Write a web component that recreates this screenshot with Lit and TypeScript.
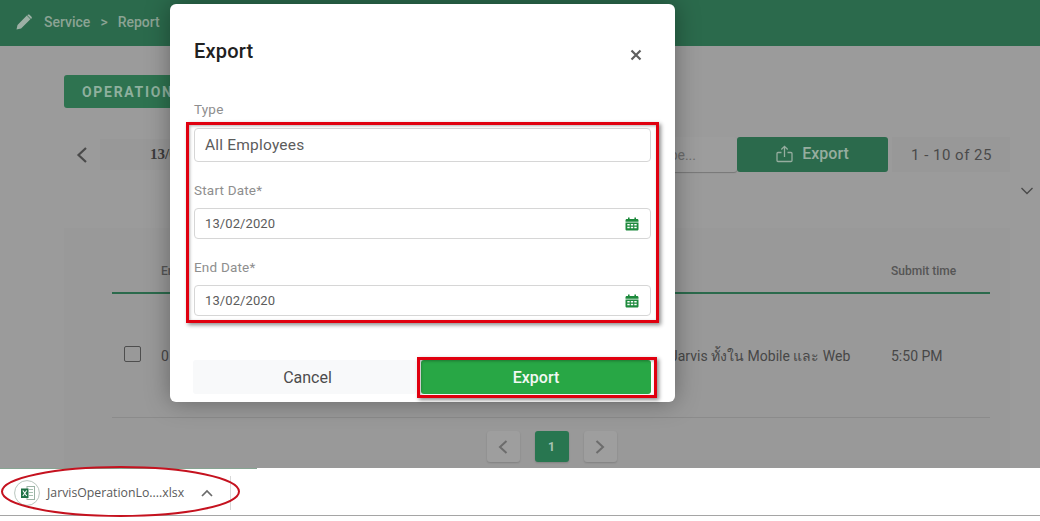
import { LitElement, html, css } from "lit";
import { customElement } from "lit/decorators.js";

const calendar = html`<svg class="cal" viewBox="0 0 14 14" width="14" height="14"><path fill="#1d8a3c" d="M3 .5h1.600v1.600h4.800V.5H11v1.600h1.200c.7 0 1.300.6 1.300 1.300v1.400H.5V3.400c0-.7.6-1.300 1.300-1.300H3z"/><path fill="#1d8a3c" fill-rule="evenodd" d="M.5 5.600h13v6.600c0 .7-.6 1.300-1.300 1.300H1.800c-.7 0-1.300-.6-1.300-1.300zM2.300 7v1.500h2.400V7zm3.500 0v1.500h2.400V7zm3.500 0v1.500h2.400V7zM2.300 9.700v1.500h2.400V9.700zm3.500 0v1.500h2.400V9.700zm3.500 0v1.500h2.400V9.700z"/></svg>`;

@customElement("app-root")
export class AppRoot extends LitElement {
  static styles = css`
    :host { display: block; position: relative; width: 1040px; height: 521px; overflow: hidden; font-family: Roboto, "Noto Sans", sans-serif; background: #fff; }
    * { box-sizing: border-box; }
    .page { display: flex; flex-direction: column; height: 468px; background: #9b9b9b; }
    .topbar { height: 46px; flex: none; background: #2b6a4c; display: flex; align-items: center; gap: 12px; padding: 0 0 3px 16px; color: #8ba394; font-size: 14px; font-weight: 500; }
    .crumbs { display: flex; gap: 10px; }
    .content { flex: 1; display: flex; flex-direction: column; padding: 29px 0 0 64px; min-height: 0; }
    .tab { align-self: flex-start; width: 150px; height: 33px; border-radius: 3px; background: #2e7350; color: #8fb09e; font-size: 14px; font-weight: 700; letter-spacing: 1.7px; display: flex; align-items: center; padding-left: 18px; }
    .toolbar { margin-top: 29px; height: 35px; display: flex; align-items: center; }
    .back { width: 36px; display: flex; padding-left: 11px; }
    .datebox { width: 560px; height: 31px; background: #989898; display: flex; align-items: center; padding-left: 50px; font: bold 15px "Liberation Serif", serif; color: #3c3c3c; }
    .search { width: 77px; height: 35px; background: #9d9d9d; border-radius: 0 3px 3px 0; box-shadow: 0 1px 1px #777; display: flex; align-items: center; font-size: 14px; color: #6c6c6c; justify-content: flex-end; padding-right: 41px; }
    .export { width: 151px; height: 35px; border-radius: 3px; background: #2b6a4c; color: #96ad9f; font-size: 16px; font-weight: 500; display: flex; align-items: center; justify-content: center; gap: 9px; padding: 0 0 2px 0; }
    .count { margin-left: 4px; width: 118px; height: 35px; padding-left: 19px; display: flex; align-items: center; font-size: 15px; color: #4a4a4a; background: #989898; letter-spacing: .5px; }
    .filter-row { height: 56px; width: 970px; display: flex; justify-content: flex-end; padding: 15px 0 0 0; }
    .card { flex: 1; width: 946px; background: #999; padding: 25px 20px 0 48px; display: flex; flex-direction: column; }
    .thead, .trow { display: grid; grid-template-columns: 49px 510px 220px 1fr; }
    .thead { height: 41px; border-bottom: 2px solid #2b6a4c; align-items: center; font-size: 12px; font-weight: 500; color: #555; padding-bottom: 3px; }
    .trow { height: 124px; border-bottom: 1px solid #8b8b8b; align-items: center; font-size: 14px; color: #474747; }
    .check { width: 17px; height: 16px; border: 1.6px solid #4e4e4e; border-radius: 2px; margin-left: 12px; margin-bottom: 4px; }
    .desc { white-space: nowrap; font-size: 14px; color: #474747; margin-left: -1px; }
    .pager { display: flex; justify-content: center; gap: 15px; margin: 13px 0 0 1px; }
    .pg { width: 33px; height: 31px; border-radius: 3px; background: #9e9e9e; box-shadow: 0 1px 2px #808080; display: flex; align-items: center; justify-content: center; color: #a9c3b4; font-size: 12px; font-weight: 700; }
    .pg.on { width: 34px; background: #287650; }
    .dl { height: 53px; display: flex; align-items: center; padding: 0 0 4px 14px; position: relative; background: #fff; color: #5a5a5a; }
    .dl::before { content: ""; position: absolute; left: 0; top: 0; width: 257px; height: 1px; background: #86a592; }
    .dl::after { content: ""; position: absolute; left: 0; right: 0; bottom: 5px; height: 1px; background: #a5a5a5; }
    .file { margin-left: 7px; font-family: "Open Sans", Roboto, sans-serif; font-size: 12.3px; }
    .caret { margin-left: 17px; display: flex; }
    .sep { width: 1px; height: 34px; background: #d8d8d8; margin-left: 17px; }

    .modal { position: absolute; left: 170px; top: 4px; width: 505px; height: 398px; background: #fff; border-radius: 6px; box-shadow: 0 0 24px rgba(0,0,0,.35); padding: 0 24px; display: flex; flex-direction: column; }
    .mhead { height: 98px; display: flex; justify-content: space-between; padding-top: 36px; flex: none; }
    .title { font-size: 20px; font-weight: 500; color: #212121; line-height: 22px; letter-spacing: .2px; }
    .close { margin: 9px 9px 0 0; }
    .label { font-size: 13.5px; color: #8e8e8e; line-height: 15px; letter-spacing: .2px; }
    .input { height: 34px; width: 457px; margin-top: 11px; border: 1px solid #d6d6d6; border-radius: 4px; padding: 0 11px 0 10px; display: flex; align-items: center; justify-content: space-between; font-size: 15.500px; color: #5c5c5c; letter-spacing: .2px; }
    .date { height: 31px; margin-top: 10px; font-size: 13px; letter-spacing: .1px; }
    .start, .end { margin-top: 21px; }
    .actions { margin-top: 44px; display: flex; margin-left: -1px; gap: 5px; }
    .btn { height: 34px; border-radius: 3px; display: flex; align-items: center; justify-content: center; font-size: 16px; }
    .cancel { width: 224px; background: #f8f9fa; color: #4c4c4c; padding-left: 6px; }
    .ok { width: 231px; background: #28a745; color: #f2f8f3; font-weight: 500; }

    .mark { position: absolute; border: 3px solid #e0000f; box-shadow: 2px 2px 4px rgba(0,0,0,.45), inset 1px 1px 3px rgba(0,0,0,.3); pointer-events: none; }
    .mark.fields { left: 186px; top: 122px; width: 473px; height: 201px; }
    .mark.go { left: 417px; top: 357px; width: 240px; height: 41px; }
    .ellipse { position: absolute; left: 0; top: 464px; pointer-events: none; }
  `;

  render() {
    return html`
      <div class="page">
        <header class="topbar">
          <svg width="16" height="16" viewBox="0 0 16 16"><path fill="#9db0a5" d="M0.500 15.500l1-4.600L10.800 1.600l3.600 3.600-9.300 9.300zM11.800.8c.5-.5 1.200-.5 1.700 0l2 2c.5.5.5 1.200 0 1.700l-.5.500-3.700-3.700z"/></svg>
          <div class="crumbs"><span>Service</span><span>&gt;</span><span>Report</span></div>
        </header>
        <div class="content">
          <div class="tab">OPERATION</div>
          <div class="toolbar">
            <div class="back"><svg width="14" height="18" viewBox="0 0 14 18"><path d="M11 2L3.500 9l7.500 7" fill="none" stroke="#4a4a4a" stroke-width="2.200"/></svg></div>
            <div class="datebox">13/02/2020</div>
            <div class="search">Type...</div>
            <div class="export">
              <svg width="17" height="18" viewBox="0 0 17 18" fill="none" stroke="#96ad9f" stroke-width="1.300"><path d="M5.500 7.500H2a1 1 0 0 0-1 1V15.500a1 1 0 0 0 1 1h13a1 1 0 0 0 1-1V8.500a1 1 0 0 0-1-1H11.500M8.500 12V1.500M5.300 4.500L8.500 1.300 11.700 4.500"/></svg>
              <span>Export</span>
            </div>
            <div class="count">1 - 10 of 25</div>
          </div>
          <div class="filter-row"><svg width="14" height="8" viewBox="0 0 14 8"><path d="M1.500 1L7 6.500 12.500 1" fill="none" stroke="#4a4a4a" stroke-width="1.400"/></svg></div>
          <div class="card">
            <div class="thead"><span></span><span>En</span><span></span><span>Submit time</span></div>
            <div class="trow"><span><div class="check"></div></span><span>0</span><span class="desc">Jarvis ทั้งใน Mobile และ Web</span><span>5:50 PM</span></div>
            <div class="pager">
              <div class="pg"><svg width="12" height="16" viewBox="0 0 12 16"><path d="M9.500 2L3 8l6.500 6" fill="none" stroke="#6c6c6c" stroke-width="2"/></svg></div>
              <div class="pg on">1</div>
              <div class="pg"><svg width="12" height="16" viewBox="0 0 12 16"><path d="M2.500 2L9 8l-6.500 6" fill="none" stroke="#6c6c6c" stroke-width="2"/></svg></div>
            </div>
          </div>
        </div>
      </div>
      <footer class="dl">
        <svg width="26" height="26" viewBox="0 0 26 26"><circle cx="13" cy="13" r="12.400" fill="#fff" stroke="#b9c6be"/><rect x="13" y="6.500" width="7.500" height="13" fill="#fff" stroke="#9bb3a5"/><path d="M15 9.500h4M15 12.500h4M15 15.500h4" stroke="#a8c2b2"/><rect x="7" y="8.500" width="7.500" height="9.500" fill="#1e7145"/><path d="M8.800 10.500l3.900 5.500M12.700 10.500L8.800 16" stroke="#fff" stroke-width="1.100"/></svg>
        <span class="file">JarvisOperationLo....xlsx</span>
        <span class="caret"><svg width="12" height="8" viewBox="0 0 12 8"><path d="M1 7l5-5 5 5" fill="none" stroke="#6a6a6a" stroke-width="1.700"/></svg></span>
        <span class="sep"></span>
      </footer>

      <section class="modal">
        <div class="mhead">
          <div class="title">Export</div>
          <svg class="close" width="12" height="12" viewBox="0 0 12 12"><path d="M1.500 1.500l9 9M10.500 1.500l-9 9" stroke="#5f5f5f" stroke-width="2.200"/></svg>
        </div>
        <div class="label">Type</div>
        <div class="input">All Employees</div>
        <div class="label start">Start Date*</div>
        <div class="input date"><span>13/02/2020</span>${calendar}</div>
        <div class="label end">End Date*</div>
        <div class="input date"><span>13/02/2020</span>${calendar}</div>
        <div class="actions">
          <div class="btn cancel">Cancel</div>
          <div class="btn ok">Export</div>
        </div>
      </section>

      <div class="mark fields"></div>
      <div class="mark go"></div>
      <svg class="ellipse" width="244" height="56" viewBox="0 0 244 56"><ellipse cx="120.500" cy="27.500" rx="118.500" ry="24.500" fill="none" stroke="#c5121f" stroke-width="2"/></svg>
    `;
  }
}
